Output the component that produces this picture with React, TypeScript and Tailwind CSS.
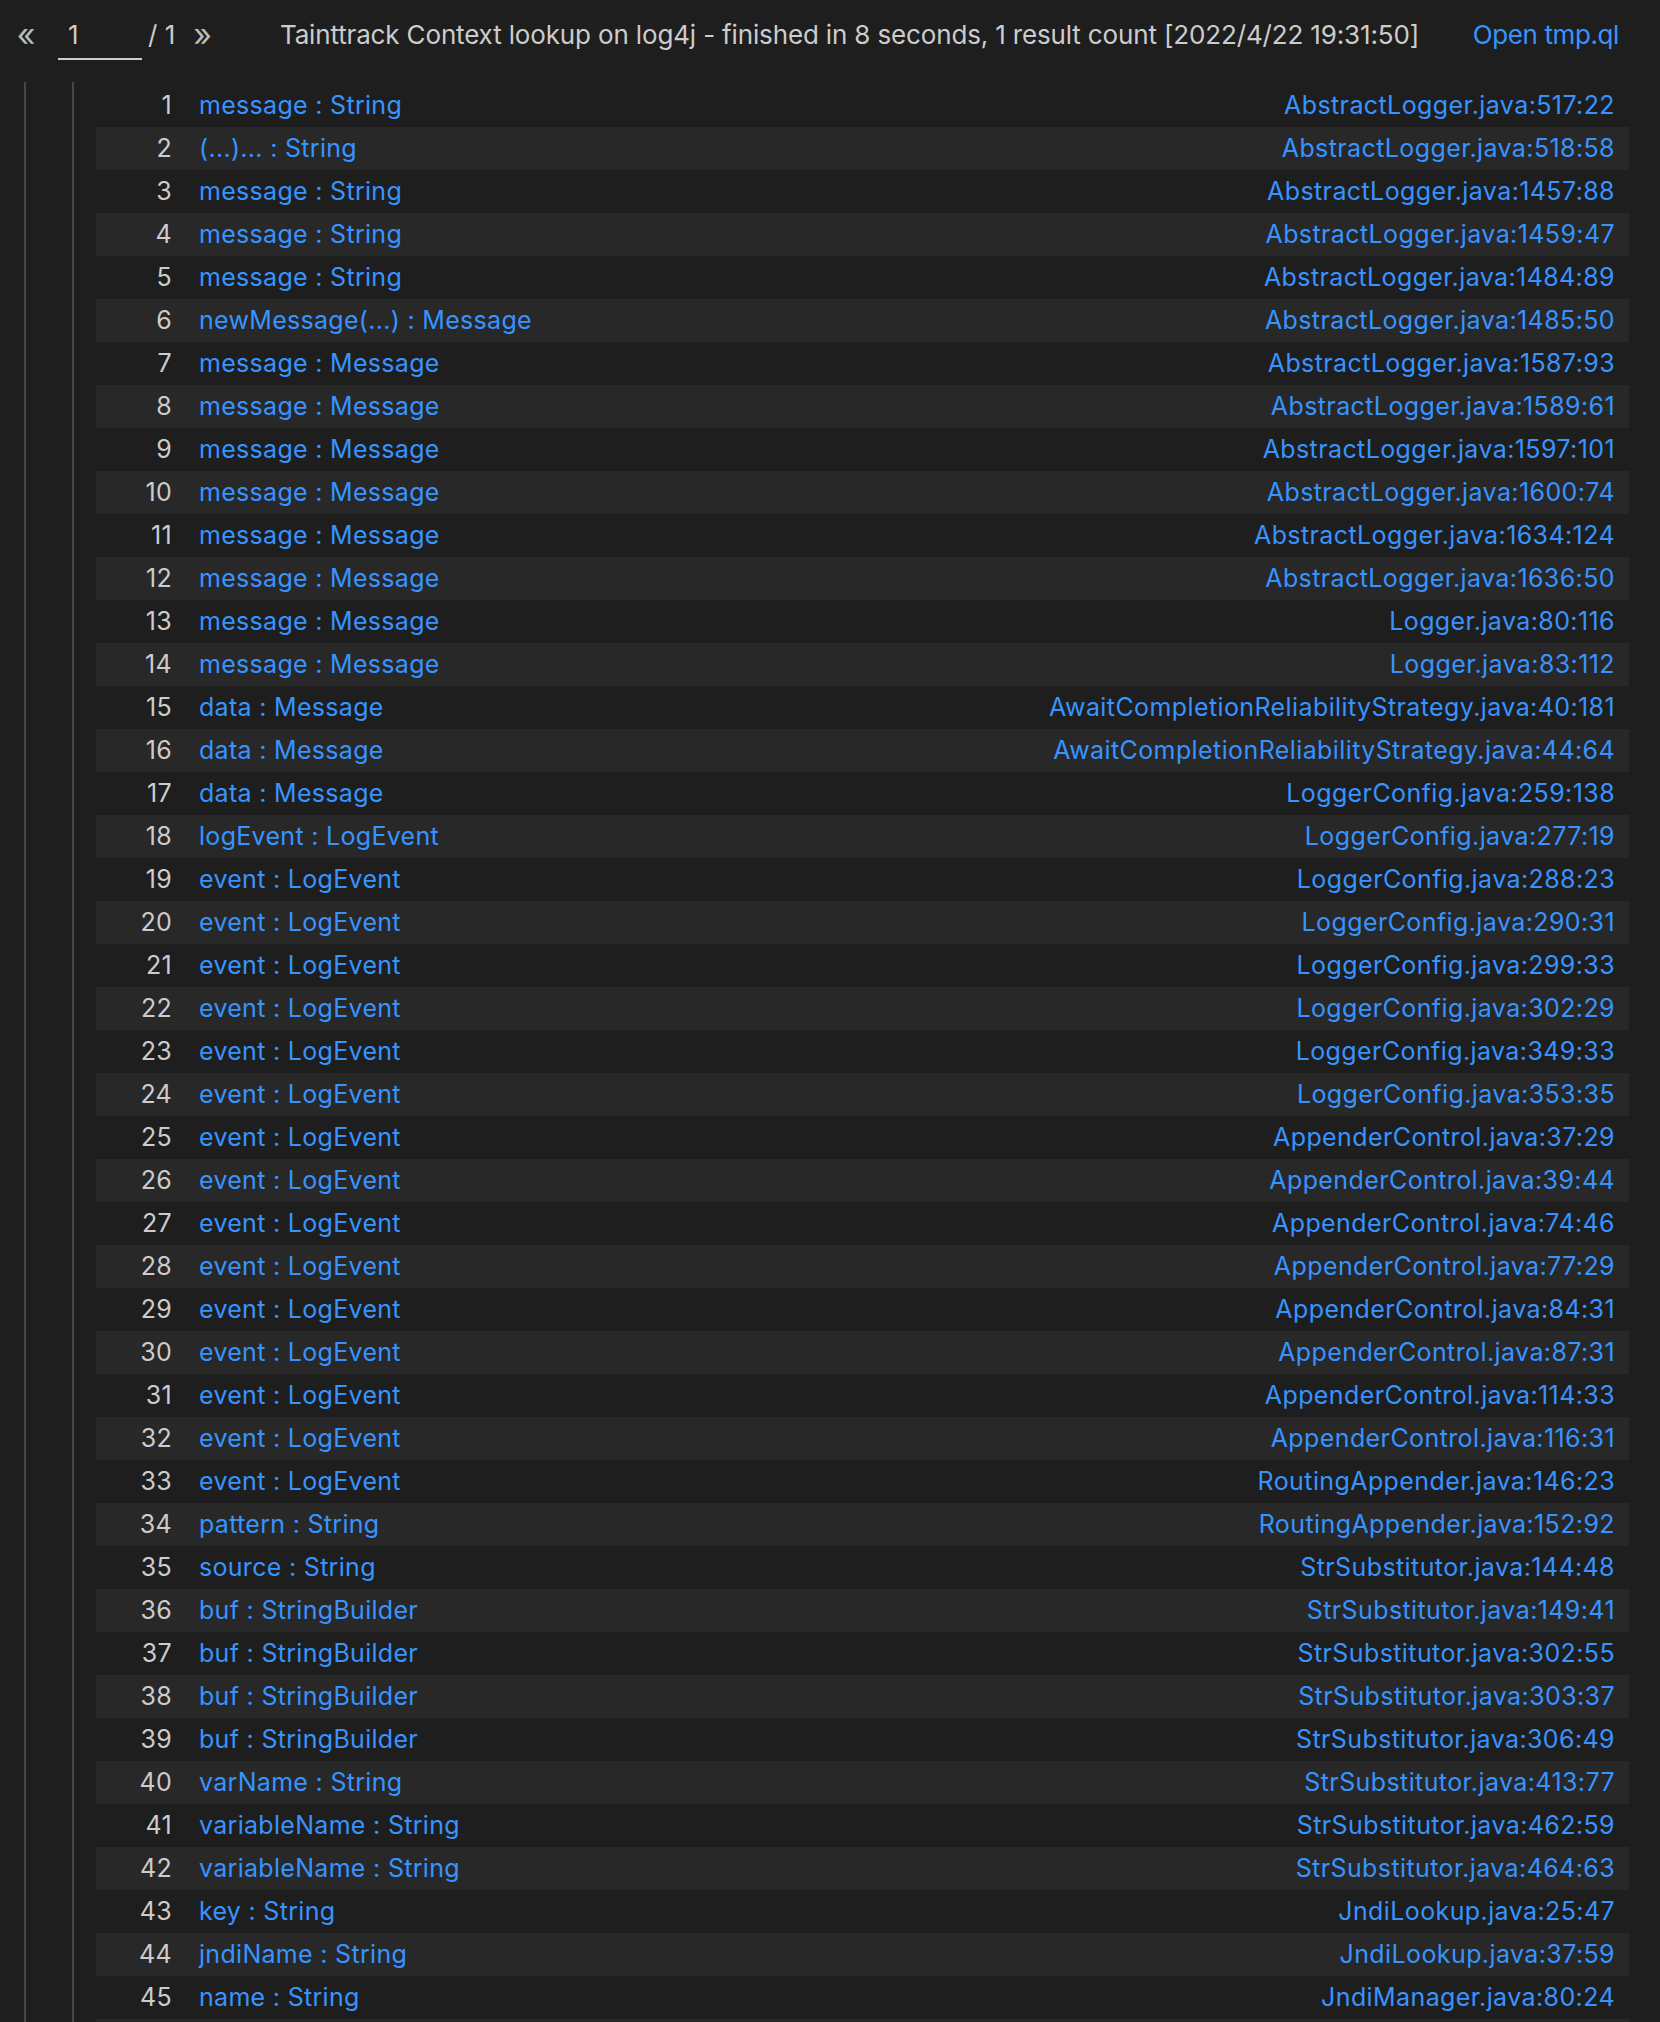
const rows: [string, string][] = [
  ["message : String", "AbstractLogger.java:517:22"],
  ["(...)... : String", "AbstractLogger.java:518:58"],
  ["message : String", "AbstractLogger.java:1457:88"],
  ["message : String", "AbstractLogger.java:1459:47"],
  ["message : String", "AbstractLogger.java:1484:89"],
  ["newMessage(...) : Message", "AbstractLogger.java:1485:50"],
  ["message : Message", "AbstractLogger.java:1587:93"],
  ["message : Message", "AbstractLogger.java:1589:61"],
  ["message : Message", "AbstractLogger.java:1597:101"],
  ["message : Message", "AbstractLogger.java:1600:74"],
  ["message : Message", "AbstractLogger.java:1634:124"],
  ["message : Message", "AbstractLogger.java:1636:50"],
  ["message : Message", "Logger.java:80:116"],
  ["message : Message", "Logger.java:83:112"],
  ["data : Message", "AwaitCompletionReliabilityStrategy.java:40:181"],
  ["data : Message", "AwaitCompletionReliabilityStrategy.java:44:64"],
  ["data : Message", "LoggerConfig.java:259:138"],
  ["logEvent : LogEvent", "LoggerConfig.java:277:19"],
  ["event : LogEvent", "LoggerConfig.java:288:23"],
  ["event : LogEvent", "LoggerConfig.java:290:31"],
  ["event : LogEvent", "LoggerConfig.java:299:33"],
  ["event : LogEvent", "LoggerConfig.java:302:29"],
  ["event : LogEvent", "LoggerConfig.java:349:33"],
  ["event : LogEvent", "LoggerConfig.java:353:35"],
  ["event : LogEvent", "AppenderControl.java:37:29"],
  ["event : LogEvent", "AppenderControl.java:39:44"],
  ["event : LogEvent", "AppenderControl.java:74:46"],
  ["event : LogEvent", "AppenderControl.java:77:29"],
  ["event : LogEvent", "AppenderControl.java:84:31"],
  ["event : LogEvent", "AppenderControl.java:87:31"],
  ["event : LogEvent", "AppenderControl.java:114:33"],
  ["event : LogEvent", "AppenderControl.java:116:31"],
  ["event : LogEvent", "RoutingAppender.java:146:23"],
  ["pattern : String", "RoutingAppender.java:152:92"],
  ["source : String", "StrSubstitutor.java:144:48"],
  ["buf : StringBuilder", "StrSubstitutor.java:149:41"],
  ["buf : StringBuilder", "StrSubstitutor.java:302:55"],
  ["buf : StringBuilder", "StrSubstitutor.java:303:37"],
  ["buf : StringBuilder", "StrSubstitutor.java:306:49"],
  ["varName : String", "StrSubstitutor.java:413:77"],
  ["variableName : String", "StrSubstitutor.java:462:59"],
  ["variableName : String", "StrSubstitutor.java:464:63"],
  ["key : String", "JndiLookup.java:25:47"],
  ["jndiName : String", "JndiLookup.java:37:59"],
  ["name : String", "JndiManager.java:80:24"],
];

export default function App() {
  return (
    <div
      className="min-h-screen bg-[#1e1e1e] text-[#cccccc] overflow-hidden"
      style={{ fontFamily: "Inter, 'Noto Sans', sans-serif" }}
    >
      <div className="h-[82px] flex items-center pb-[12px]">
        <button className="ml-[15px] w-[22px] text-[32px] leading-none text-[#bbbbbb]">«</button>
        <div className="ml-[21px] w-[84px] h-[50px] border-b-2 border-[#cccccc] text-[26px] leading-none pl-[10px] pt-[12px]">
          1
        </div>
        <span className="ml-[6px] text-[26px] leading-none">/ 1</span>
        <button className="ml-[18px] text-[32px] leading-none text-[#bbbbbb]">»</button>
        <span className="ml-[68px] text-[26px] leading-none tracking-[-0.15px] whitespace-nowrap">
          Tainttrack Context lookup on log4j - finished in 8 seconds, 1 result count [2022/4/22 19:31:50]
        </span>
        <a className="ml-auto mr-[41px] text-[26px] leading-none text-[#3794ff] tracking-[-0.4px]">Open tmp.ql</a>
      </div>
      <div className="flex pl-[24px]">
        <div className="w-[2px] bg-[#474747] shrink-0" />
        <div className="ml-[46px] w-[2px] bg-[#474747] shrink-0" />
        <div className="ml-[22px] w-[1533px] pt-[2px]">
          {rows.map(([label, loc], i) => (
            <div
              key={i}
              className={`h-[43px] flex items-center text-[25px] tracking-[0.3px] pr-[14px] ${i % 2 === 1 ? "bg-[#282828]" : ""}`}
            >
              <span className="w-[76px] text-right">{i + 1}</span>
              <span className="ml-[27px] text-[#3794ff]">{label}</span>
              <span className="ml-auto text-[#3794ff] tracking-[0.4px]">{loc}</span>
            </div>
          ))}
          <div className="h-[43px] bg-[#282828]" />
        </div>
      </div>
    </div>
  );
}
